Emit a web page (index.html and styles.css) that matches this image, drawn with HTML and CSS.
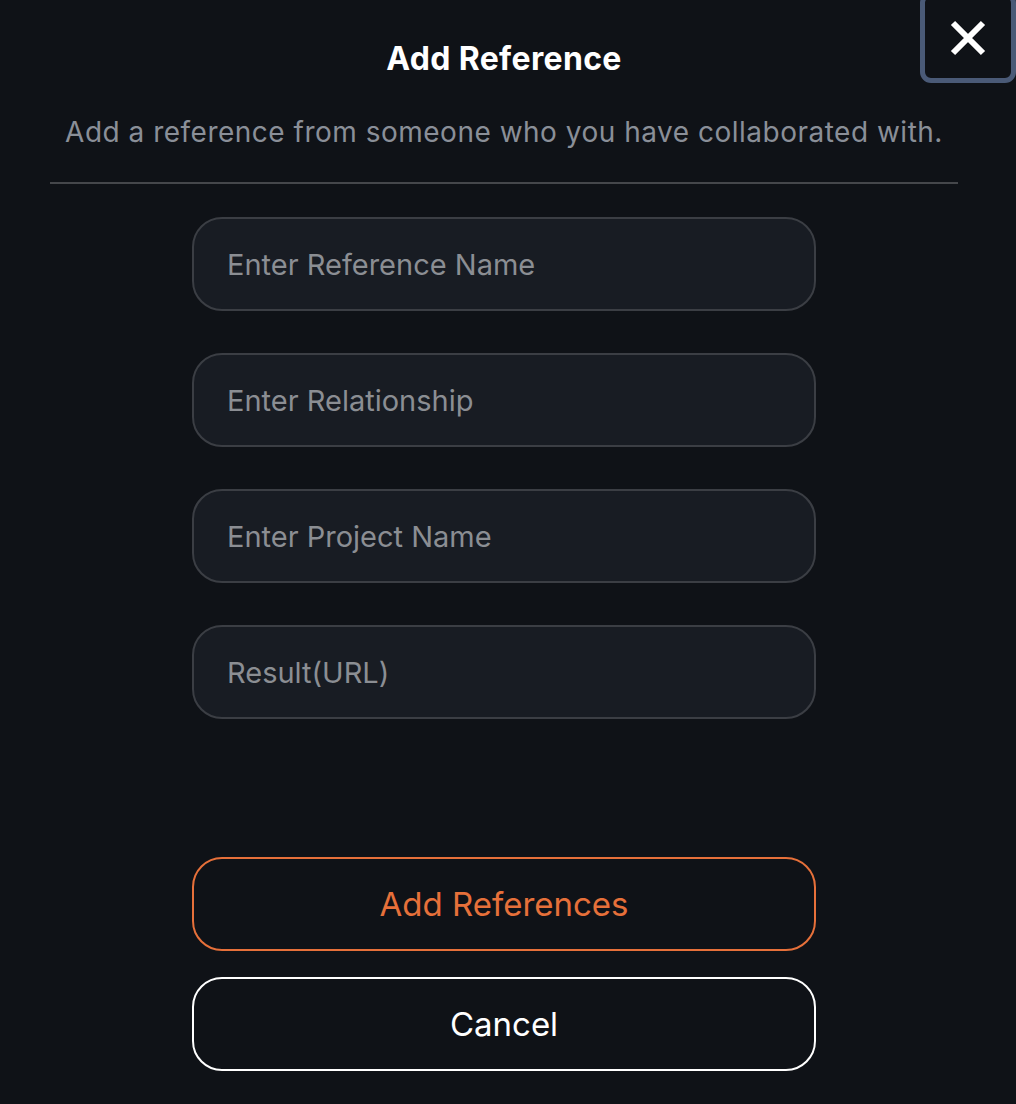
FILE: index.html
```html
<!DOCTYPE html>
<html lang="en">
<head>
<meta charset="utf-8">
<title>Add Reference</title>
<link rel="stylesheet" href="styles.css">
</head>
<body>
<main class="modal">
  <button class="close-btn" aria-label="Close">
    <svg width="36" height="36" viewBox="0 0 36 36"><path d="M3 3 L33 33 M33 3 L3 33" stroke="#fff" stroke-width="6" stroke-linecap="butt"/></svg>
  </button>
  <header class="head">
    <h1 class="title">Add Reference</h1>
    <p class="subtitle">Add a reference from someone who you have collaborated with.</p>
  </header>
  <hr class="divider">
  <form class="form">
    <input class="field" type="text" placeholder="Enter Reference Name">
    <input class="field" type="text" placeholder="Enter Relationship">
    <input class="field" type="text" placeholder="Enter Project Name">
    <input class="field" type="text" placeholder="Result(URL)">
    <div class="actions">
      <button type="button" class="btn btn-primary">Add References</button>
      <button type="button" class="btn btn-cancel">Cancel</button>
    </div>
  </form>
</main>
</body>
</html>
```

FILE: styles.css
```css
* { box-sizing: border-box; }
html, body {
  margin: 0;
  background: #0f1217;
}
body {
  font-family: "Inter", "Liberation Sans", sans-serif;
  color: #fff;
  width: 1016px;
  height: 1104px;
  overflow: hidden;
}
.modal {
  position: relative;
  width: 1008px;
  padding: 0 50px;
}
.close-btn {
  position: absolute;
  top: -8px;
  left: 920px;
  width: 96px;
  height: 91px;
  background: #0f1217;
  border: 5px solid #4a5a77;
  border-radius: 11px;
  display: flex;
  align-items: center;
  justify-content: center;
  padding: 0;
  cursor: pointer;
}
.head {
  display: flex;
  flex-direction: column;
  align-items: center;
  padding-top: 39px;
}
.title {
  margin: 0;
  font-size: 32px;
  font-weight: 700;
  line-height: 40px;
  letter-spacing: 0.35px;
}
.subtitle {
  margin: 36px 0 0;
  font-size: 28px;
  line-height: 34px;
  color: #8a8f98;
  letter-spacing: 0.5px;
}
.divider {
  margin: 33px 0 0;
  border: 0;
  height: 2px;
  background: #45474b;
}
.form {
  display: flex;
  flex-direction: column;
  align-items: center;
  padding-top: 33px;
  gap: 42px;
}
.field {
  width: 624px;
  height: 94px;
  background: #181c23;
  border: 2px solid #3b3e44;
  border-radius: 30px;
  padding: 0 33px;
  font-family: inherit;
  font-size: 29px;
  color: #fff;
  outline: none;
}
.field::placeholder {
  color: #8b8e93;
}
.actions {
  display: flex;
  flex-direction: column;
  gap: 26px;
  margin-top: 96px;
}
.btn {
  width: 624px;
  height: 94px;
  border-radius: 30px;
  background: transparent;
  font-family: inherit;
  font-size: 33px;
  cursor: pointer;
}
.btn-primary {
  border: 2px solid #e6703a;
  color: #e6703a;
}
.btn-cancel {
  border: 2px solid #ffffff;
  color: #ffffff;
}
```
